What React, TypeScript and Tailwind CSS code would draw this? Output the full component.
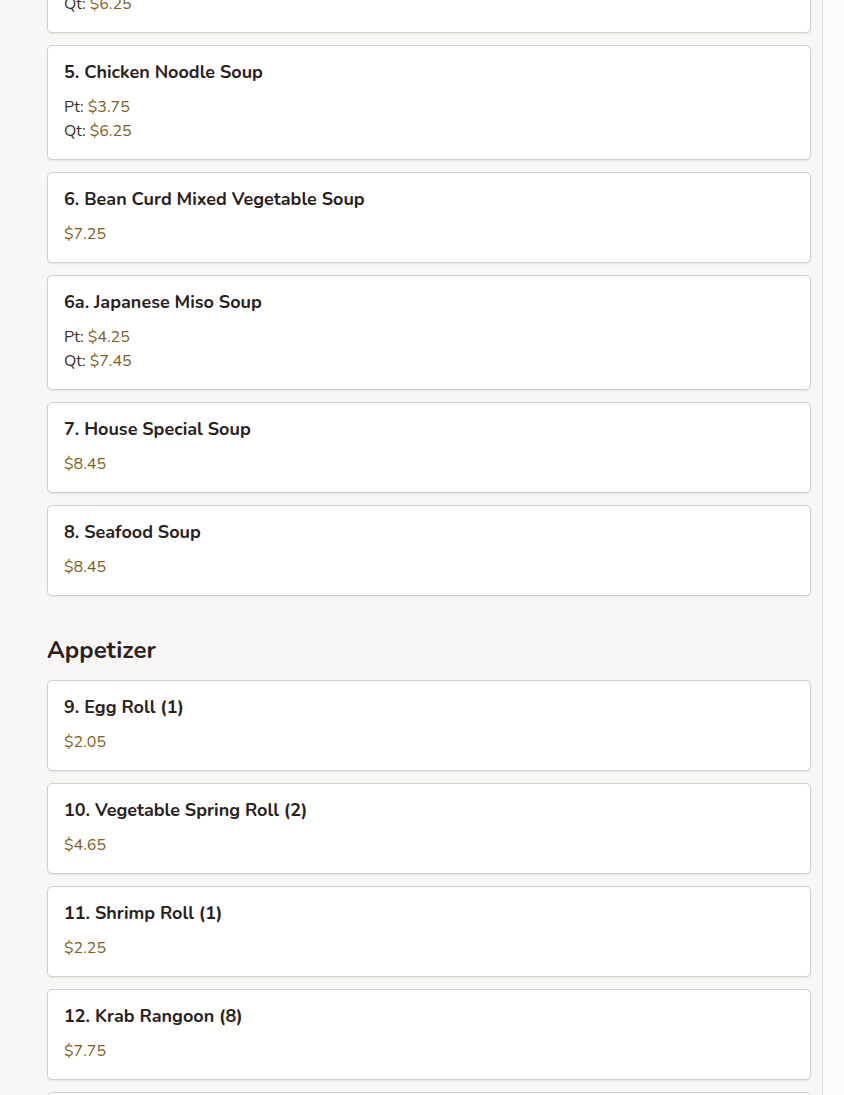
type Item = { name: string; price?: string; pt?: string; qt?: string };

const soups: Item[] = [
  { name: "4. Wonton Soup", pt: "$3.75", qt: "$6.25" },
  { name: "5. Chicken Noodle Soup", pt: "$3.75", qt: "$6.25" },
  { name: "6. Bean Curd Mixed Vegetable Soup", price: "$7.25" },
  { name: "6a. Japanese Miso Soup", pt: "$4.25", qt: "$7.45" },
  { name: "7. House Special Soup", price: "$8.45" },
  { name: "8. Seafood Soup", price: "$8.45" },
];

const appetizers: Item[] = [
  { name: "9. Egg Roll (1)", price: "$2.05" },
  { name: "10. Vegetable Spring Roll (2)", price: "$4.65" },
  { name: "11. Shrimp Roll (1)", price: "$2.25" },
  { name: "12. Krab Rangoon (8)", price: "$7.75" },
  { name: "13. Fried Wonton (10)", price: "$6.25" },
];

function MenuCard({ item }: { item: Item }) {
  return (
    <div className="rounded-[5px] border border-[#d3d0cc] bg-white px-4 pt-[13px] pb-[16px] shadow-[0_1px_2px_rgba(0,0,0,0.08)]">
      <h3 className="text-[18px] font-bold leading-[27px] text-[#2b211c]">{item.name}</h3>
      <div className="mt-[9px] text-[16px] leading-[24px]">
        {item.price ? (
          <div className="text-[#7f5f1f]">{item.price}</div>
        ) : (
          <>
            <div className="text-[#3a302b]">
              Pt: <span className="text-[#7f5f1f]">{item.pt}</span>
            </div>
            <div className="text-[#3a302b]">
              Qt: <span className="text-[#7f5f1f]">{item.qt}</span>
            </div>
          </>
        )}
      </div>
    </div>
  );
}

export default function App() {
  return (
    <div
      className="h-[1095px] overflow-hidden bg-[#f8f7f5]"
      style={{ fontFamily: "Nunito, Lato, 'Noto Sans', sans-serif" }}
    >
      <div className="flex h-full">
        <main className="w-[823px] border-r border-[#dcdad7] pl-[47px] pr-[11px]">
          <div className="-mt-[82px] flex flex-col gap-3">
            {soups.map((s) => (
              <MenuCard key={s.name} item={s} />
            ))}
          </div>
          <h2 className="mt-[38px] mb-[14px] text-[24px] font-bold leading-[32px] text-[#2b211c]">
            Appetizer
          </h2>
          <div className="flex flex-col gap-3">
            {appetizers.map((s) => (
              <MenuCard key={s.name} item={s} />
            ))}
          </div>
        </main>
        <div className="flex-1 bg-[#fbfbfa]" />
      </div>
    </div>
  );
}
